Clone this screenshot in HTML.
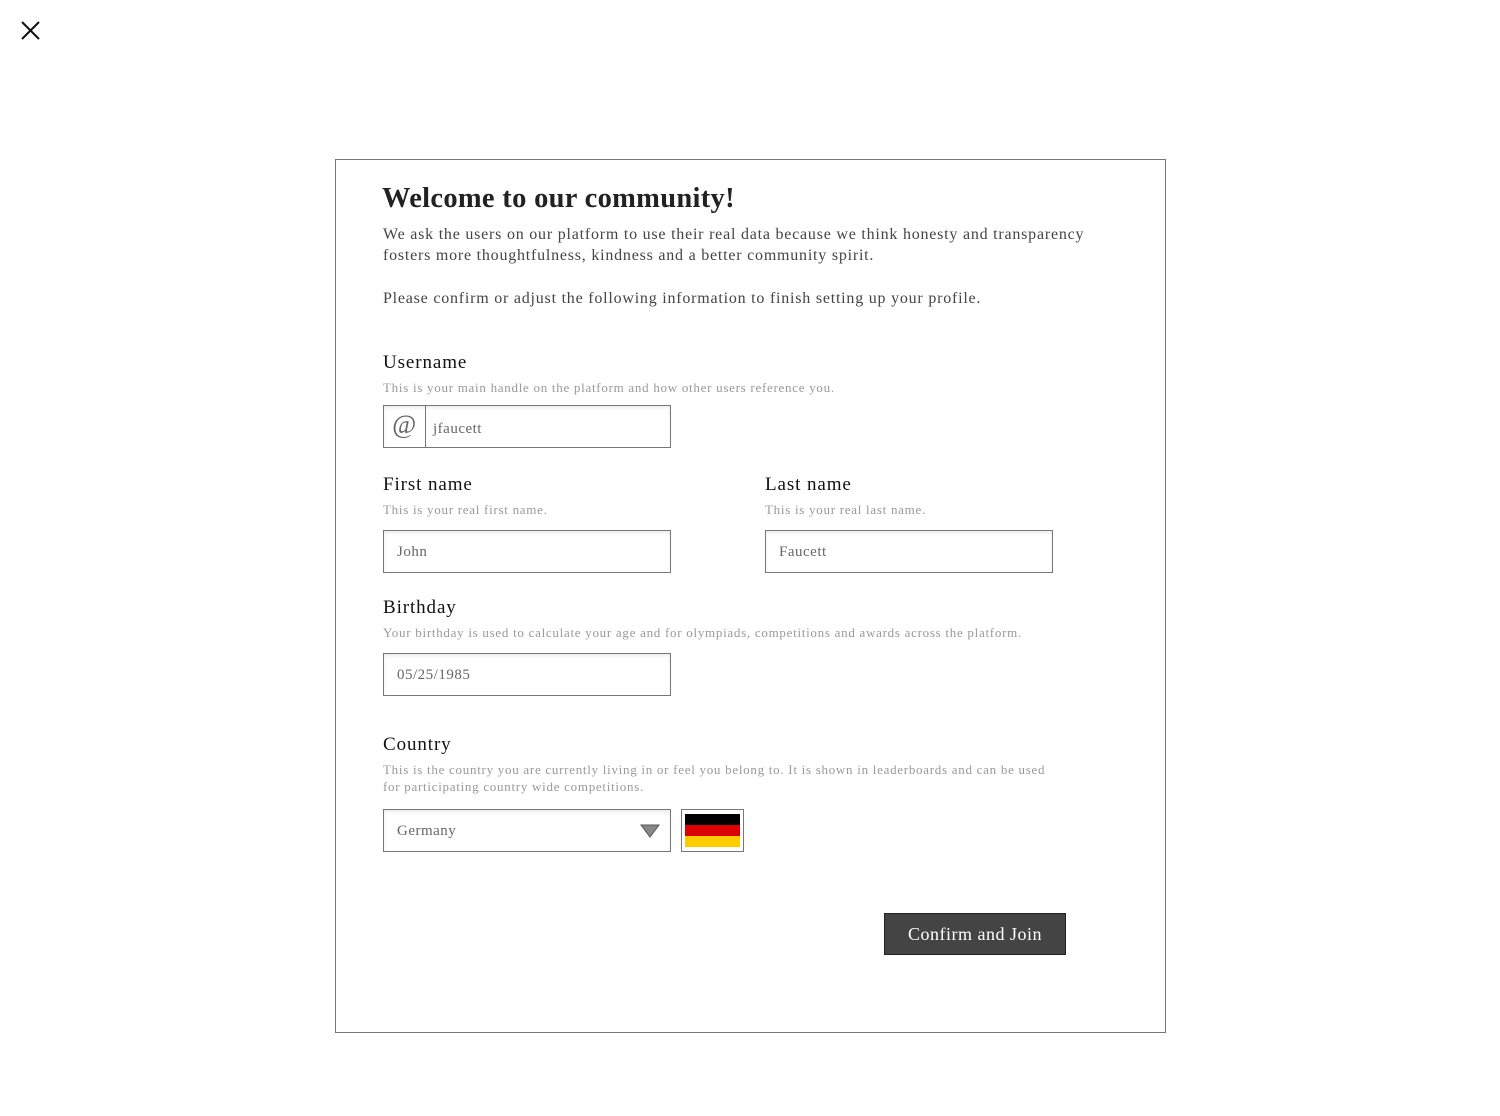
<!DOCTYPE html>
<html><head><style>
body{margin:0;width:1500px;height:1116px;background:#fff;font-family:"Liberation Serif",serif;position:relative;overflow:hidden;color:#333}
.a{position:absolute;white-space:nowrap}
.card{position:absolute;left:335px;top:159px;width:829px;height:872px;border:1px solid #777}
h1{position:absolute;left:382px;top:183px;margin:0;font-size:28.5px;font-weight:bold;color:#222;letter-spacing:0.3px}
.p{font-size:16px;color:#444;letter-spacing:0.78px}
.lbl{font-size:19px;color:#111;letter-spacing:0.9px}
.hint{font-size:13px;color:#999;letter-spacing:0.72px}
.in{position:absolute;height:41px;border:1px solid #777;box-sizing:border-box;box-shadow:inset 0 2px 3px rgba(0,0,0,0.08);font-size:15px;color:#666;line-height:42px;padding-left:13px;letter-spacing:0.5px}
</style></head><body>
<svg class="a" style="left:21px;top:21px" width="19" height="19" viewBox="0 0 19 19"><path d="M1 1L18 18M18 1L1 18" stroke="#111" stroke-width="2"/></svg>
<div class="card"></div>
<h1>Welcome to our community!</h1>
<div class="a p" style="left:383px;top:226px">We ask the users on our platform to use their real data because we think honesty and transparency</div>
<div class="a p" style="left:383px;top:247px">fosters more thoughtfulness, kindness and a better community spirit.</div>
<div class="a p" style="left:383px;top:290px">Please confirm or adjust the following information to finish setting up your profile.</div>

<div class="a lbl" style="left:383px;top:352px">Username</div>
<div class="a hint" style="left:383px;top:380px">This is your main handle on the platform and how other users reference you.</div>
<div class="in" style="left:383px;top:405px;width:288px;height:43px;padding-left:0">
<span style="display:inline-block;width:41px;border-right:1px solid #777;text-align:center;font-size:26px;color:#666;height:41px;line-height:38px">@</span><span style="padding-left:7px">jfaucett</span></div>

<div class="a lbl" style="left:383px;top:474px">First name</div>
<div class="a hint" style="left:383px;top:502px">This is your real first name.</div>
<div class="in" style="left:383px;top:530px;width:288px;height:43px">John</div>
<div class="a lbl" style="left:765px;top:474px">Last name</div>
<div class="a hint" style="left:765px;top:502px">This is your real last name.</div>
<div class="in" style="left:765px;top:530px;width:288px;height:43px">Faucett</div>

<div class="a lbl" style="left:383px;top:597px">Birthday</div>
<div class="a hint" style="left:383px;top:625px">Your birthday is used to calculate your age and for olympiads, competitions and awards across the platform.</div>
<div class="in" style="left:383px;top:653px;width:288px;height:43px">05/25/1985</div>

<div class="a lbl" style="left:383px;top:734px">Country</div>
<div class="a hint" style="left:383px;top:762px">This is the country you are currently living in or feel you belong to. It is shown in leaderboards and can be used</div>
<div class="a hint" style="left:383px;top:779px">for participating country wide competitions.</div>
<div class="in" style="left:383px;top:809px;width:288px;height:43px">Germany
<svg style="position:absolute;right:10px;top:14px" width="20" height="14" viewBox="0 0 20 14"><path d="M1 1H19L10 13Z" fill="#888" stroke="#555" stroke-width="1"/></svg></div>
<div class="a" style="left:681px;top:809px;width:61px;height:41px;border:1px solid #777;background:#fff">
<div style="position:absolute;left:3px;top:4px;width:55px;height:11px;background:#000"></div>
<div style="position:absolute;left:3px;top:15px;width:55px;height:11px;background:#d00"></div>
<div style="position:absolute;left:3px;top:26px;width:55px;height:11px;background:#fc0"></div>
</div>

<div class="a" style="left:884px;top:913px;width:182px;height:42px;background:#444;border:1px solid #222;box-sizing:border-box;color:#fff;font-size:18px;text-align:center;line-height:40px;letter-spacing:0.5px">Confirm and Join</div>
</body></html>
